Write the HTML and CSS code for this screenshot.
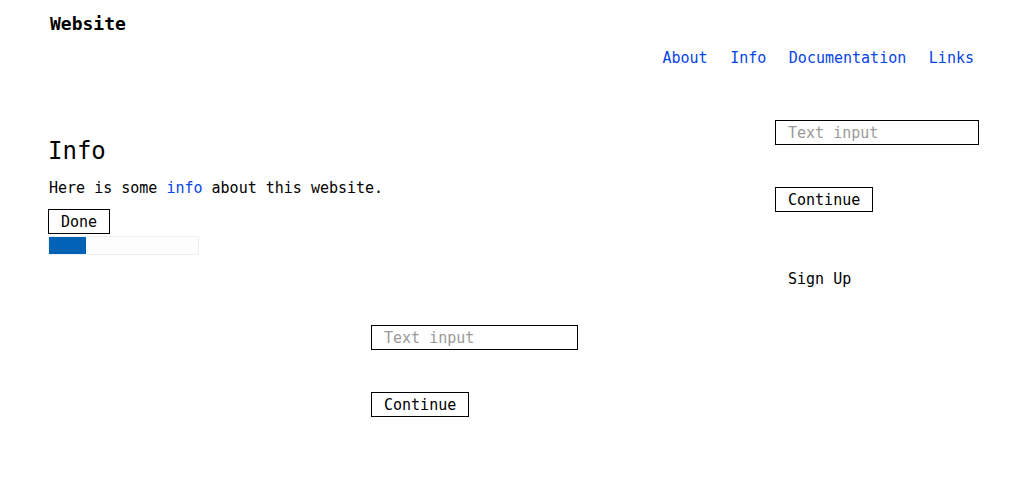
FILE: index.html
```html
<!DOCTYPE html>
<html lang="en">
<head>
<meta charset="utf-8">
<title>Website</title>
<link rel="stylesheet" href="styles.css">
</head>
<body>
<header class="site-header">
  <div class="brand">Website</div>
  <nav class="nav">
    <a href="#">About</a>
    <a href="#">Info</a>
    <a href="#">Documentation</a>
    <a href="#">Links</a>
  </nav>
</header>
<main class="main">
  <section class="content">
    <h1 class="title">Info</h1>
    <p class="text">Here is some <a href="#">info</a> about this website.</p>
    <button class="btn done">Done</button>
    <div class="progress"><div class="progress-fill" style="width:25%"></div></div>
  </section>
  <aside class="sidebar">
    <input class="field field-side" type="text" placeholder="Text input">
    <button class="btn continue">Continue</button>
    <button class="btn plain signup">Sign Up</button>
  </aside>
</main>
<section class="center-form">
  <input class="field field-center" type="text" placeholder="Text input">
  <button class="btn continue">Continue</button>
</section>
</body>
</html>
```
FILE: styles.css
```css
* { box-sizing: border-box; }
html, body { background: #fff; }
body {
  margin: 0;
  font-family: "DejaVu Sans Mono", monospace;
  font-size: 15px;
  color: #000;
}
a { color: #0645e8; text-decoration: none; }

.site-header {
  padding: 13px 52px 0 50px;
}
.brand {
  font-size: 18px;
  font-weight: bold;
  line-height: 21px;
}
.nav {
  display: flex;
  justify-content: flex-end;
  gap: 22.6px;
  margin-top: 16px;
  line-height: 17px;
}

.main {
  display: flex;
  justify-content: space-between;
  align-items: flex-start;
  padding: 0 47px 0 48px;
  margin-top: 53px;
}
.content {
  display: flex;
  flex-direction: column;
  align-items: flex-start;
  padding-top: 17px;
}
.title {
  margin: 0;
  font-size: 24px;
  font-weight: normal;
  line-height: 28px;
}
.text {
  margin: 15px 0 0 1px;
  line-height: 17px;
}
.btn {
  font-family: "DejaVu Sans Mono", monospace;
  font-size: 15px;
  color: #000;
  background: #fff;
  border: 1px solid #000;
  border-radius: 0;
  height: 25px;
  line-height: 23px;
  padding: 1px 12px 0;
  margin: 0;
}
.done { margin-top: 12px; }
.progress {
  margin-top: 2px;
  width: 151px;
  height: 19px;
  border: 1px solid #efefef;
  background: #fdfdfd;
}
.progress-fill {
  height: 100%;
  background: #0063b5;
}

.sidebar {
  display: flex;
  flex-direction: column;
  align-items: flex-start;
}
.field {
  font-family: "DejaVu Sans Mono", monospace;
  font-size: 15px;
  height: 25px;
  border: 1px solid #000;
  border-radius: 0;
  padding: 1px 12px 0;
  margin: 0;
  background: #fff;
  outline: none;
}
.field::placeholder { color: #9a9a9a; }
.field-side { width: 204px; }
.field-center { width: 207px; }
.continue { margin-top: 42px; }
.plain { border-color: transparent; background: transparent; }
.signup { margin-top: 54px; }

.center-form {
  display: flex;
  flex-direction: column;
  align-items: flex-start;
  padding-left: 371px;
  margin-top: 34px;
}
```
